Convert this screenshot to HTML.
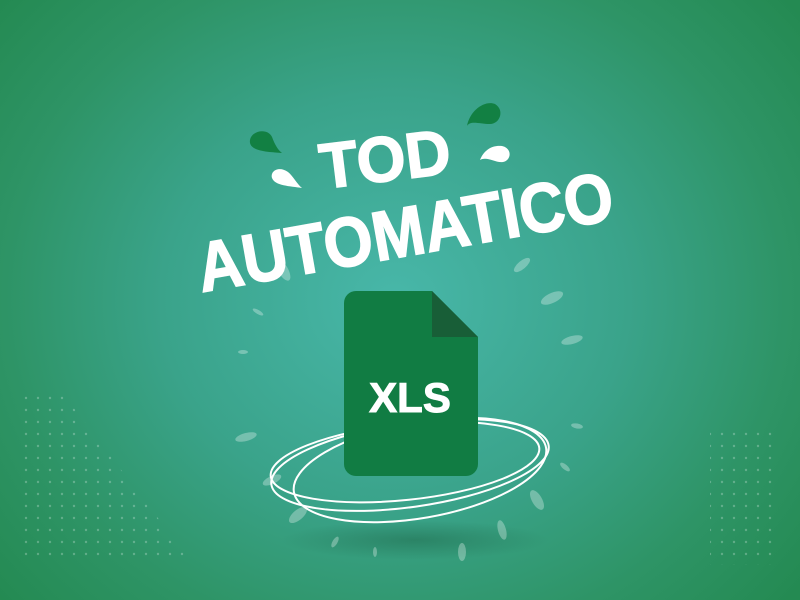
<!DOCTYPE html>
<html><head><meta charset="utf-8"><style>
html,body{margin:0;padding:0}
body{width:800px;height:600px;overflow:hidden;position:relative;font-family:"Liberation Sans",sans-serif;
background:radial-gradient(ellipse 520px 460px at 395px 300px,#48b7a9 0%,#3aa38a 45%,#2e9466 75%,#248a52 100%);}
.t{position:absolute;color:#fff;font-weight:bold;white-space:nowrap;transform-origin:center}
</style></head><body>
<div style="position:absolute;left:280px;top:520px;width:270px;height:40px;border-radius:50%;background:radial-gradient(ellipse,rgba(20,80,50,.35),rgba(20,80,50,0) 70%)"></div>
<svg width="800" height="600" style="position:absolute;left:0;top:0">
<defs>
<pattern id="d" width="12" height="12" patternUnits="userSpaceOnUse"><circle cx="2" cy="2" r="1.2" fill="rgba(255,255,255,.25)"/></pattern>
</defs>
<polygon points="18,390 60,390 190,560 18,560" fill="url(#d)"/>
<rect x="710" y="430" width="70" height="135" fill="url(#d)"/>
<g fill="rgba(255,255,255,.3)">
<ellipse cx="552" cy="298" rx="12" ry="5" transform="rotate(-25 552 298)"/>
<ellipse cx="572" cy="340" rx="11" ry="4" transform="rotate(-15 572 340)"/>
<ellipse cx="522" cy="265" rx="10" ry="4" transform="rotate(-40 522 265)"/>
<ellipse cx="246" cy="437" rx="11" ry="4" transform="rotate(-15 246 437)"/>
<ellipse cx="272" cy="480" rx="10" ry="4" transform="rotate(-25 272 480)"/>
<ellipse cx="298" cy="515" rx="11" ry="5" transform="rotate(-40 298 515)"/>
<ellipse cx="243" cy="352" rx="5" ry="2"/>
<ellipse cx="258" cy="312" rx="6" ry="2" transform="rotate(30 258 312)"/>
<ellipse cx="577" cy="426" rx="6" ry="2.5" transform="rotate(10 577 426)"/>
<ellipse cx="565" cy="467" rx="6" ry="2.5" transform="rotate(40 565 467)"/>
<ellipse cx="537" cy="500" rx="5" ry="11" transform="rotate(-30 537 500)"/>
<ellipse cx="502" cy="530" rx="4" ry="10" transform="rotate(-15 502 530)"/>
<ellipse cx="462" cy="552" rx="4" ry="9"/>
<ellipse cx="375" cy="552" rx="2" ry="5"/>
<ellipse cx="335" cy="542" rx="2.5" ry="6" transform="rotate(30 335 542)"/>
<ellipse cx="283" cy="270" rx="5" ry="12" transform="rotate(-30 283 270)"/>
</g>
<path d="M250,140 C252,130 268,128 272,137 C275,145 278,150 282,153 C270,152 248,152 250,140Z" fill="#128043"/>
<path d="M467,126 C470,110 485,100 495,104 C505,110 500,124 490,124 C480,124 470,120 467,126Z" fill="#128043"/>
<path d="M272,178 C270,170 280,166 288,172 C293,176 297,184 302,188 C290,186 275,186 272,178Z" fill="#fff"/>
<path d="M480,160 C484,150 492,145 502,146 C512,148 512,160 503,162 C495,163 487,156 480,160Z" fill="#fff"/>
<g fill="none" stroke="#fff" stroke-width="2">
<ellipse cx="410" cy="465" rx="140" ry="42" transform="rotate(-8 410 465)"/>
<ellipse cx="420" cy="470" rx="128" ry="48" transform="rotate(-10 420 470)"/>
<ellipse cx="405" cy="462" rx="135" ry="38" transform="rotate(-6 405 462)"/>
</g>
<path d="M356,291 H432 L478,337 V464 A12,12 0 0 1 466,476 H356 A12,12 0 0 1 344,464 V303 A12,12 0 0 1 356,291Z" fill="#117c43"/>
<path d="M432,291 L478,337 H432Z" fill="#185e37"/>
<text x="410" y="412" text-anchor="middle" font-family="Liberation Sans" font-weight="bold" font-size="42" fill="#fff" stroke="#fff" stroke-width="1">XLS</text>
</svg>
<div class="t" style="left:300px;top:122px;width:170px;text-align:center;font-size:64px;-webkit-text-stroke:1.5px #fff;transform:rotate(-7deg) scaleX(0.98)">TOD</div>
<div class="t" style="left:170px;top:192px;width:470px;text-align:center;font-size:70px;-webkit-text-stroke:1.5px #fff;transform:rotate(-10deg) scaleX(0.9)">AUTOMATICO</div>
</body></html>
